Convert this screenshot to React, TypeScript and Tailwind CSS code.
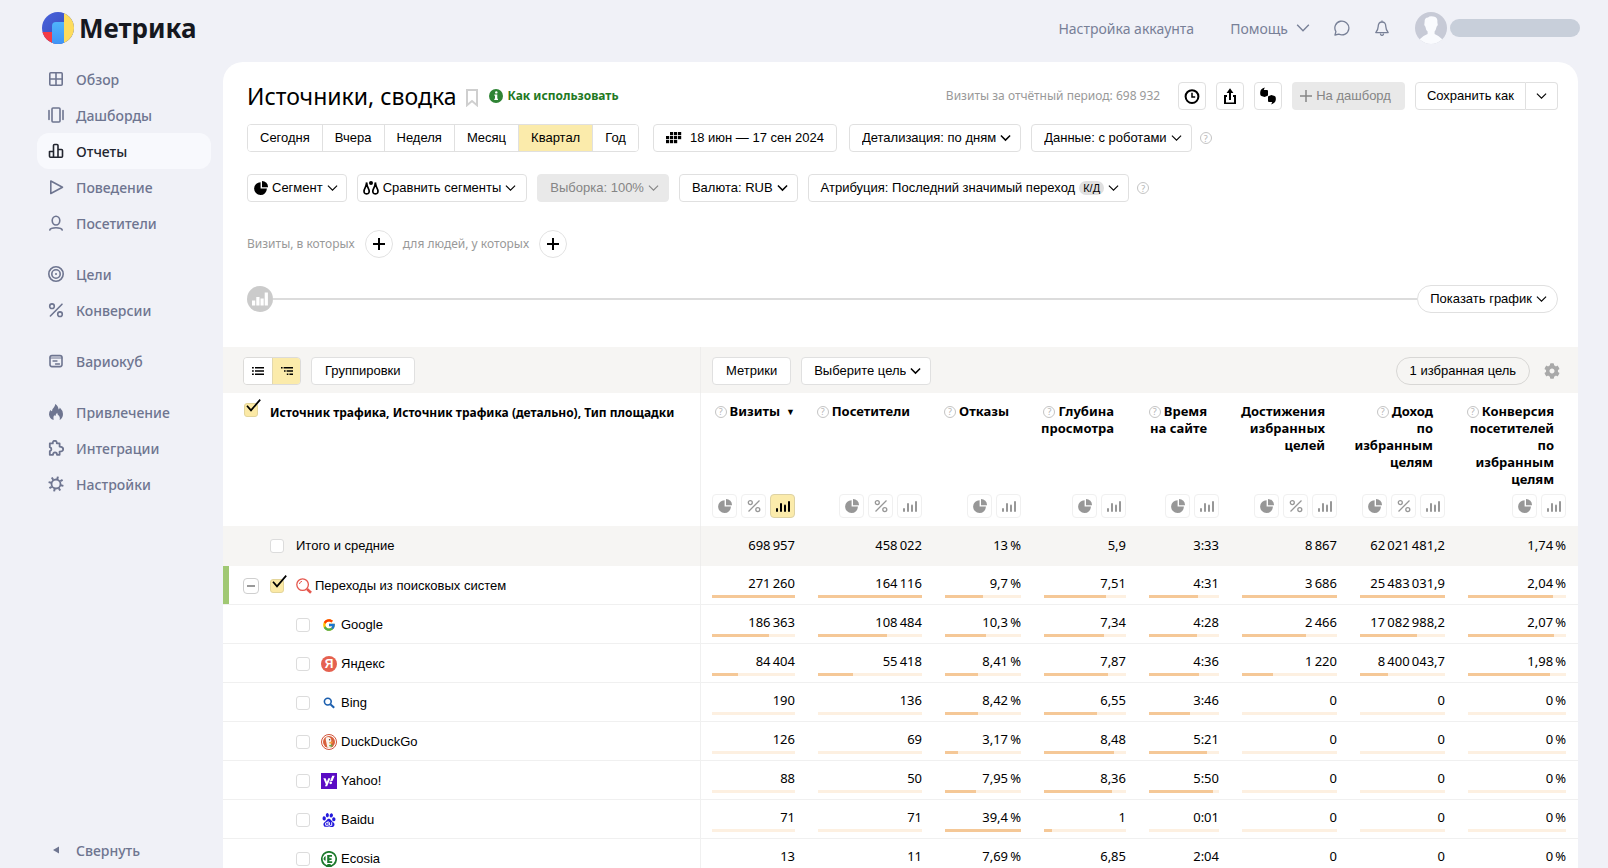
import React from 'react';
import clsx from 'clsx';
import { FcGoogle } from 'react-icons/fc';
import { FaCog, FaYahoo } from 'react-icons/fa';
import { SiBaidu } from 'react-icons/si';

/* ---------- icons ---------- */

const Chevron: React.FC<{ className?: string; bold?: boolean }> = ({ className = 'w-[11px] h-2', bold }) => (
  <svg viewBox="0 0 12 8" className={clsx('shrink-0', className)} fill="none" stroke="currentColor" strokeWidth={bold ? 1.6 : 1.2}>
    <path d="M1 1.3 L6 6.3 L11 1.3" />
  </svg>
);

const Pie: React.FC<{ className?: string }> = ({ className }) => (
  <svg viewBox="0 0 14 14" className={clsx('w-3.5 h-3.5 shrink-0', className)} fill="currentColor">
    <path d="M6.6 1.2 V7.6 H12.9 A6.4 6.4 0 1 1 6.6 1.2 Z" />
    <path d="M8 0 A6 6 0 0 1 14 6.2 H8 Z" />
  </svg>
);

const Percent: React.FC<{ className?: string }> = ({ className }) => (
  <svg viewBox="0 0 14 14" className={clsx('w-3.5 h-3.5 shrink-0', className)} fill="none" stroke="currentColor" strokeWidth="1.3">
    <circle cx="3.3" cy="3.6" r="2" />
    <circle cx="10.8" cy="10.6" r="2" />
    <path d="M12.5 1.5 L1.5 12.5" />
  </svg>
);

const Bars: React.FC<{ className?: string }> = ({ className }) => (
  <svg viewBox="0 0 14 12" className={clsx('w-3.5 h-3 shrink-0', className)} fill="currentColor">
    <rect x="0" y="8" width="2" height="4" rx="1" />
    <rect x="4" y="3" width="2" height="9" rx="1" />
    <rect x="8" y="4.5" width="2" height="7.5" rx="1" />
    <rect x="12" y="1" width="2" height="11" rx="1" />
  </svg>
);

const Help: React.FC<{ className?: string }> = ({ className }) => (
  <span className={clsx('inline-flex items-center justify-center w-3 h-3 rounded-full border border-[#c4c4c4] text-[#b4b4b4] text-[9px] leading-none font-normal shrink-0 font-["Noto_Sans",sans-serif]', className)}>
    ?
  </span>
);

const Logo = () => (
  <svg viewBox="0 0 32 32" className="w-8 h-8 shrink-0">
    <defs>
      <clipPath id="logo-clip">
        <circle cx="16" cy="16" r="16" />
      </clipPath>
      <linearGradient id="logo-sky" x1="0" y1="0" x2="0" y2="1">
        <stop offset="0" stopColor="#4fb4fb" />
        <stop offset="1" stopColor="#3f93f5" />
      </linearGradient>
      <linearGradient id="logo-blue" x1="0" y1="0" x2="1" y2="1">
        <stop offset="0" stopColor="#4a63dd" />
        <stop offset="1" stopColor="#3148b4" />
      </linearGradient>
    </defs>
    <g clipPath="url(#logo-clip)">
      <rect width="32" height="32" fill="url(#logo-blue)" />
      <rect y="20" width="12" height="12" fill="#f33b45" />
      <path d="M10 32 V14 Q10 10 14 10 H22 V32 Z" fill="url(#logo-sky)" />
      <rect x="22" width="10" height="32" fill="#fddc5c" />
    </g>
  </svg>
);

const navSvg = (children: React.ReactNode) => (
  <svg viewBox="0 0 16 16" className="w-4 h-4 shrink-0" fill="none" stroke="currentColor" strokeWidth="1.6" strokeLinejoin="round" strokeLinecap="round">
    {children}
  </svg>
);

const navIcons: Record<string, React.ReactNode> = {
  overview: navSvg(
    <>
      <rect x="1.8" y="1.8" width="12.4" height="12.4" rx="1" />
      <path d="M8 2 V14 M2 8 H14" />
    </>
  ),
  dashboards: navSvg(
    <>
      <rect x="4" y="1" width="8" height="14" rx="1" />
      <path d="M1 3.5 V12.5 M15 3.5 V12.5" />
    </>
  ),
  reports: navSvg(<path d="M1.5 8.5 H5.5 V14.2 H2.5 Q1.5 14.2 1.5 13.2 Z M5.5 14.2 V2.5 Q5.5 1.5 6.5 1.5 H9 Q10 1.5 10 2.5 V14.2 Z M10 6.5 H13.5 Q14.5 6.5 14.5 7.5 V13.2 Q14.5 14.2 13.5 14.2 H10" />),
  behavior: navSvg(<path d="M2.8 2 L14.5 8.2 L2.8 14.5 Z" />),
  visitors: navSvg(
    <>
      <ellipse cx="8" cy="5.6" rx="3.8" ry="4.4" />
      <path d="M1.8 15 Q2.4 12.8 8 12.8 Q13.6 12.8 14.2 15" />
    </>
  ),
  goals: navSvg(
    <>
      <circle cx="8" cy="8" r="7.2" />
      <circle cx="8" cy="8" r="4.2" />
      <circle cx="8" cy="8" r="1" fill="currentColor" stroke="none" />
    </>
  ),
  conversions: navSvg(
    <>
      <circle cx="4" cy="4.2" r="2.3" />
      <circle cx="12" cy="12.2" r="2.3" />
      <path d="M14 2.2 L2.4 14" />
    </>
  ),
  variocube: navSvg(
    <>
      <rect x="2" y="2.6" width="12" height="11" rx="2" />
      <path d="M2 5 H14" strokeWidth="1" />
      <path d="M5 8 H9 M7.5 11 H11.5" strokeWidth="1.3" />
    </>
  ),
  attraction: navSvg(
    <path
      d="M7.2 0 Q10.2 1.6 10.6 5.6 Q11.6 5 11.8 3.4 Q14.8 6.2 15 10 Q15 14 11.6 16 Q12.6 12.8 9.8 10.8 Q9.4 9.8 9.2 8.8 Q7.6 10.2 7.4 12 Q6.6 11.8 6.2 11 Q4.8 13 5.6 16 Q1.4 14.4 1 10.4 Q1 7.8 2.4 6 Q3 7 4 7.2 Q4 5.2 5.8 3.4 Q7.2 2 7.2 0 Z"
      fill="currentColor"
      stroke="none"
    />
  ),
  integrations: navSvg(
    <path
      d="M1.8 3.4 H4.8 Q4.6 0.8 6.8 0.8 Q9 0.8 8.8 3.4 H11.6 V6.6 Q15.2 6.8 15.2 9.2 Q15.2 11.6 11.6 11.6 V14.8 H9 Q9 12.4 7 12.4 Q5 12.4 5 14.8 H1.8 V11.2 Q3.4 10.8 3.4 9.2 Q3.4 7.6 1.8 7.2 Z"
      strokeWidth="1.8"
    />
  ),
  settings: navSvg(
    <>
      <circle cx="8" cy="8" r="4.5" strokeWidth="1.8" />
      <path
        d="M9.3 3.2 L9.9 0.6 M12.3 5.2 L14.6 3.8 M12.8 9.3 L15.4 9.9 M10.8 12.3 L12.2 14.6 M6.7 12.8 L6.1 15.4 M3.7 10.8 L1.4 12.2 M3.2 6.7 L0.6 6.1 M5.2 3.7 L3.8 1.4"
        strokeWidth="2"
        strokeLinecap="butt"
      />
    </>
  ),
};

/* ---------- data ---------- */

const navGroups = [
  [
    { icon: 'overview', label: 'Обзор' },
    { icon: 'dashboards', label: 'Дашборды' },
    { icon: 'reports', label: 'Отчеты', active: true },
    { icon: 'behavior', label: 'Поведение' },
    { icon: 'visitors', label: 'Посетители' },
  ],
  [
    { icon: 'goals', label: 'Цели' },
    { icon: 'conversions', label: 'Конверсии' },
  ],
  [{ icon: 'variocube', label: 'Вариокуб' }],
  [
    { icon: 'attraction', label: 'Привлечение' },
    { icon: 'integrations', label: 'Интеграции' },
    { icon: 'settings', label: 'Настройки' },
  ],
];

const periods = ['Сегодня', 'Вчера', 'Неделя', 'Месяц', 'Квартал', 'Год'];

interface Metric {
  lines: string[];
  help: boolean;
  percent: boolean;
  sorted?: boolean;
}

const metrics: Metric[] = [
  { lines: ['Визиты'], help: true, percent: true, sorted: true },
  { lines: ['Посетители'], help: true, percent: true },
  { lines: ['Отказы'], help: true, percent: false },
  { lines: ['Глубина', 'просмотра'], help: true, percent: false },
  { lines: ['Время', 'на сайте'], help: true, percent: false },
  { lines: ['Достижения', 'избранных', 'целей'], help: false, percent: true },
  { lines: ['Доход', 'по', 'избранным', 'целям'], help: true, percent: true },
  { lines: ['Конверсия', 'посетителей', 'по', 'избранным', 'целям'], help: true, percent: false },
];

const totals = ['698 957', '458 022', '13 %', '5,9', '3:33', '8 867', '62 021 481,2', '1,74 %'];

interface Row {
  name: string;
  values: string[];
  bars: number[];
}

const rows: Row[] = [
  { name: 'Переходы из поисковых систем', values: ['271 260', '164 116', '9,7 %', '7,51', '4:31', '3 686', '25 483 031,9', '2,04 %'], bars: [100, 100, 50, 75, 70, 100, 100, 87] },
  { name: 'Google', values: ['186 363', '108 484', '10,3 %', '7,34', '4:28', '2 466', '17 082 988,2', '2,07 %'], bars: [69, 66, 54, 73, 69, 67, 67, 88] },
  { name: 'Яндекс', values: ['84 404', '55 418', '8,41 %', '7,87', '4:36', '1 220', '8 400 043,7', '1,98 %'], bars: [31, 34, 44, 78, 72, 33, 33, 84] },
  { name: 'Bing', values: ['190', '136', '8,42 %', '6,55', '3:46', '0', '0', '0 %'], bars: [0, 0, 44, 65, 58, 0, 0, 0] },
  { name: 'DuckDuckGo', values: ['126', '69', '3,17 %', '8,48', '5:21', '0', '0', '0 %'], bars: [0, 0, 17, 85, 83, 0, 0, 0] },
  { name: 'Yahoo!', values: ['88', '50', '7,95 %', '8,36', '5:50', '0', '0', '0 %'], bars: [0, 0, 41, 83, 91, 0, 0, 0] },
  { name: 'Baidu', values: ['71', '71', '39,4 %', '1', '0:01', '0', '0', '0 %'], bars: [0, 0, 100, 10, 0, 0, 0, 0] },
  { name: 'Ecosia', values: ['13', '11', '7,69 %', '6,85', '2:04', '0', '0', '0 %'], bars: [0, 0, 40, 68, 32, 0, 0, 0] },
];

// digit groups are separated with a thin space
const thin = (value: string) => value.replace(/ /g, '\u2009');

const sourceIcons: Record<string, React.ReactNode> = {
  Google: <FcGoogle className="w-3.5 h-3.5" />,
  Яндекс: (
    <span className="flex items-center justify-center w-4 h-4 rounded-full bg-[#e5614f] text-white text-[12px] leading-none font-bold">Я</span>
  ),
  Bing: (
    <svg viewBox="0 0 12 12" className="w-3 h-3" fill="none" stroke="#1c5fae" strokeWidth="1.6">
      <circle cx="4.8" cy="4.6" r="3.4" />
      <path d="M7.4 7.2 L11.2 10.8" strokeWidth="2" />
    </svg>
  ),
  DuckDuckGo: (
    <svg viewBox="0 0 16 16" className="w-4 h-4">
      <circle cx="8" cy="8" r="7.5" fill="#fff" stroke="#d0533a" strokeWidth="1" />
      <circle cx="8" cy="8" r="6" fill="#d9603c" />
      <path d="M5 3.6 Q8.4 2 10 4.8 Q10.8 6.8 9.8 8.6 L10.2 13.6 Q8 14.4 6.4 13.6 Q5.6 9.6 5 7 Q4.4 4.8 5 3.6 Z" fill="#fbf4ee" />
      <circle cx="8.6" cy="5.8" r="0.7" fill="#4a3a33" />
      <path d="M8.2 8 L12 7.6 L11 9.4 L8.4 9.6 Z" fill="#f2a13a" />
      <path d="M8 11 L11.4 10.4 V12.8 L8.6 12.6 Z" fill="#6aa84a" />
    </svg>
  ),
  'Yahoo!': (
    <span className="flex items-center justify-center w-4 h-4 bg-[#5a0bc4]">
      <FaYahoo className="w-3 h-3 text-white" />
    </span>
  ),
  Baidu: <SiBaidu className="w-3.5 h-3.5 text-[#2319dc]" />,
  Ecosia: (
    <svg viewBox="0 0 16 16" className="w-4 h-4">
      <circle cx="8" cy="8" r="7.2" fill="#fff" stroke="#1d7a2d" strokeWidth="1.7" />
      <path d="M6.2 4 H11 V5.8 H8.4 V7.2 H10.6 V8.9 H8.4 V10.3 H11.2 V12 H6.2 Z" fill="#1d7a2d" />
      <path d="M2.4 8 Q3 5.6 4.6 5 V9.8 Q3 9.6 2.4 8 Z M5 16 L6.6 13 H9.4 L11 16 Z" fill="#1d7a2d" />
    </svg>
  ),
};

/* ---------- controls ---------- */

const btn = 'h-7 flex items-center bg-white border border-[#e0e0e0] rounded whitespace-nowrap cursor-pointer';

interface SelectProps {
  label: string;
  value: string;
  disabled?: boolean;
  bold?: boolean;
}

const Select: React.FC<SelectProps> = ({ label, value, disabled, bold }) => (
  <label
    className={clsx(
      'h-7 flex items-center gap-1 border rounded pl-3 pr-[9px] whitespace-nowrap',
      disabled ? 'bg-[#e9e9e9] border-[#e9e9e9] text-[#858585]' : 'bg-white border-[#e0e0e0]'
    )}
  >
    <select aria-label={label} disabled={disabled} className="appearance-none field-sizing-content bg-transparent outline-none opacity-100">
      <option>{value}</option>
    </select>
    <Chevron bold={bold} />
  </label>
);

const Checkbox: React.FC<{ label: string; checked?: boolean }> = ({ label, checked }) => (
  <span className="relative block w-3.5 h-3.5 shrink-0">
    <input
      type="checkbox"
      aria-label={label}
      defaultChecked={checked}
      className="peer block appearance-none w-3.5 h-3.5 rounded-[3px] border border-[#dcdcdc] bg-white checked:bg-[#fbe9a5] checked:border-[#e3d59b]"
    />
    <svg viewBox="0 0 16 14" className="absolute left-0.5 -top-1 w-4 h-3.5 hidden peer-checked:block pointer-events-none" fill="none" stroke="#000" strokeWidth="1.7">
      <path d="M1 6.8 L5 11.4 L14.2 0.6" />
    </svg>
  </span>
);

/* ---------- sections ---------- */

const TopBar = () => (
  <header className="flex items-center justify-between h-[62px] pb-1.5 pl-[42px] pr-7 shrink-0">
    <a href="#" className="flex items-center gap-[5px]">
      <Logo />
      <span className="text-[26px] leading-8 font-bold text-[#16181f]">Метрика</span>
    </a>
    <div className="flex items-center text-[14px] text-[#788097]">
      <a href="#" className="mr-9">Настройка аккаунта</a>
      <button className="flex items-center gap-2 mr-6 cursor-pointer">
        Помощь
        <Chevron className="w-3.5 h-2.5" />
      </button>
      <button aria-label="Чат" className="mr-6">
        <svg viewBox="0 0 16 16" className="w-4 h-4" fill="none" stroke="currentColor" strokeWidth="1.3" strokeLinejoin="round">
          <path d="M1 15 L1.9 11.6 A7 6.9 0 1 1 4.8 14.2 Z" />
        </svg>
      </button>
      <button aria-label="Уведомления" className="mr-[25px]">
        <svg viewBox="0 0 16 16" className="w-4 h-4" fill="none" stroke="currentColor" strokeWidth="1.3" strokeLinejoin="round">
          <path d="M8 0.4 V2 M8 2 Q4.2 2 4.2 6.6 Q4.2 9.6 1.8 12.6 H14.2 Q11.8 9.6 11.8 6.6 Q11.8 2 8 2 Z M6.4 13.6 Q6.6 15.4 8 15.4 Q9.4 15.4 9.6 13.6" />
        </svg>
      </button>
      <svg viewBox="0 0 32 32" className="w-8 h-8 mr-[3px]">
        <clipPath id="avatar-clip">
          <circle cx="16" cy="16" r="16" />
        </clipPath>
        <g clipPath="url(#avatar-clip)">
          <rect width="32" height="32" fill="#c7cad6" />
          <path d="M9.6 10 Q9.4 5.4 13 5.4 Q14.6 3.6 18.4 4.4 Q23 4.8 22.4 10.4 Q23.6 13 21.6 14.8 Q21 18 19.6 19.4 V22 Q25 24.4 27 27 L27 32 H5 V27 Q7.4 24 12.6 22 V19.4 Q10.8 18 10.4 14.8 Q8.6 13 9.6 10 Z" fill="#fafbfe" />
        </g>
      </svg>
      <div className="w-[130px] h-[18px] rounded-full bg-[#c8cfda]" />
    </div>
  </header>
);

const Sidebar = () => (
  <aside className="flex flex-col w-[223px] shrink-0 -mt-px pb-0.5 pl-[37px] pr-3 text-[14px] font-medium text-[#6e7590]">
    <nav className="flex flex-col gap-[15px]">
      {navGroups.map((group, i) => (
        <ul key={i}>
          {group.map((item) => (
            <li key={item.label}>
              <a
                href="#"
                className={clsx('flex items-center gap-3 h-9 pl-[11px] rounded-xl', 'active' in item && item.active && 'bg-[#f8f9fd] text-[#22252f]')}
              >
                {navIcons[item.icon]}
                {item.label}
              </a>
            </li>
          ))}
        </ul>
      ))}
    </nav>
    <button className="mt-auto flex items-center gap-3 h-8 pl-[11px] cursor-pointer">
      <svg viewBox="0 0 16 16" className="w-4 h-4" fill="currentColor">
        <path d="M11 4.5 V11.5 L5 8 Z" />
      </svg>
      Свернуть
    </button>
  </aside>
);

const TitleRow = () => (
  <div className="flex items-center h-7">
    <h1 className="text-[23px] leading-7 font-normal">Источники, сводка</h1>
    <button aria-label="В избранное" className="ml-2.5 mt-1">
      <svg viewBox="0 0 12 18" className="w-3 h-[18px]" fill="none" stroke="#cfcfcf" strokeWidth="2">
        <path d="M1 1 H11 V16.2 L6 12 L1 16.2 Z" />
      </svg>
    </button>
    <a href="#" className="flex items-center gap-1 ml-[11px] text-[12px] font-bold text-[#23791f]">
      <svg viewBox="0 0 14 14" className="w-3.5 h-3.5">
        <circle cx="7" cy="7" r="7" fill="#2f8435" />
        <circle cx="7.3" cy="3.4" r="1.2" fill="#fff" />
        <path d="M5.4 5.6 H8.3 V9.8 H9 V11 H5.3 V9.8 H6 V6.8 H5.4 Z" fill="#fff" />
      </svg>
      Как использовать
    </a>
    <div className="ml-auto flex items-center gap-2.5 font-['Liberation_Sans',Arial,sans-serif] text-[13px]">
      <span className="mr-2 text-[12px] text-[#999] font-['Noto_Sans',sans-serif]">Визиты за отчётный период: 698 932</span>
      <button aria-label="История" className={clsx(btn, 'w-7 justify-center')}>
        <svg viewBox="0 0 16 16" className="w-4 h-4" fill="none" stroke="#000">
          <circle cx="8" cy="8.6" r="6.4" strokeWidth="2" />
          <path d="M8 4.8 V9 H11.2" strokeWidth="1.5" />
        </svg>
      </button>
      <button aria-label="Экспорт" className={clsx(btn, 'w-7 justify-center')}>
        <svg viewBox="0 0 16 16" className="w-4 h-4" fill="none" stroke="#000" strokeWidth="2">
          <path d="M5 8 H3 V15.4 H13 V8 H11" />
          <path d="M8 12 V3" />
          <path d="M4.6 5 L8 0.2 L11.4 5 Z" fill="#000" stroke="none" />
        </svg>
      </button>
      <button aria-label="Комментарии" className={clsx(btn, 'w-7 justify-center')}>
        <svg viewBox="0 0 16 18" className="w-4 h-[18px]" fill="#000">
          <path d="M4.8 0.6 L3.8 3 H7 Q8 3 8 4 V8 Q8 9 7 9 L4.6 10 L1.4 9 Q0.2 8.4 0.2 7 V5.2 Q0.4 1.8 4.8 0.6 Z" />
          <path d="M11.2 17.4 L12.2 15 H9 Q8 15 8 14 V10 Q8 9 9 9 L11.4 8 L14.6 9 Q15.8 9.6 15.8 11 V12.8 Q15.6 16.2 11.2 17.4 Z" />
        </svg>
      </button>
      <button disabled className="h-7 flex items-center gap-1 px-2 pr-3.5 rounded bg-[#e9e9e9] text-[#858585] whitespace-nowrap">
        <svg viewBox="0 0 12 12" className="w-3 h-3" stroke="currentColor" strokeWidth="1.5">
          <path d="M6 0 V12 M0 6 H12" />
        </svg>
        На дашборд
      </button>
      <div className="flex">
        <button className={clsx(btn, 'rounded-r-none px-[11px]')}>Сохранить как</button>
        <button aria-label="Варианты сохранения" className={clsx(btn, 'rounded-l-none border-l-0 w-8 justify-center')}>
          <Chevron />
        </button>
      </div>
    </div>
  </div>
);

const Filters = () => (
  <div className="font-['Liberation_Sans',Arial,sans-serif] text-[13px]">
    <div className="flex items-center mt-3.5">
      <div className="flex h-7 border border-[#e0e0e0] rounded overflow-hidden">
        {periods.map((p) => (
          <button
            key={p}
            className={clsx('px-3 border-l border-[#e0e0e0] first:border-l-0 cursor-pointer', p === 'Квартал' ? 'bg-[#fbebab]' : 'bg-white')}
          >
            {p}
          </button>
        ))}
      </div>
      <button className={clsx(btn, 'ml-3.5 px-3 gap-2')}>
        <svg viewBox="0 0 16 12" className="w-4 h-3" fill="#000">
          {[[4, 0], [8, 0], [12, 0], [0, 4], [4, 4], [8, 4], [12, 4], [0, 8], [4, 8], [8, 8]].map(([x, y]) => (
            <rect key={`${x}-${y}`} x={x} y={y} width="3.2" height="3.2" />
          ))}
        </svg>
        18 июн — 17 сен 2024
      </button>
      <div className="flex items-center gap-2.5 ml-3">
        <Select label="Детализация" value="Детализация: по дням" bold />
        <Select label="Данные" value="Данные: с роботами" />
      </div>
      <Help className="ml-2" />
    </div>

    <div className="flex items-center gap-2.5 mt-[22px]">
      <button className={clsx(btn, 'gap-1 pl-1.5 pr-2')}>
        <Pie />
        Сегмент
        <Chevron />
      </button>
      <button className={clsx(btn, 'gap-1 pl-[5px] pr-2.5')}>
        <svg viewBox="0 0 16 14" className="w-4 h-3.5" fill="none" stroke="#000" strokeWidth="1.7">
          <circle cx="8" cy="2" r="2" fill="#000" stroke="none" />
          <path d="M3.6 3.4 L1.2 9 Q0.4 12.8 3.6 12.8 Q6.8 12.8 6 9 Z" />
          <path d="M12.4 3.4 L10 9 Q9.2 12.8 12.4 12.8 Q15.6 12.8 14.8 9 Z" />
          <path d="M2.6 1.6 H4.6 V5 H2.6 Z M11.4 1.6 H13.4 V5 H11.4 Z" fill="#000" stroke="none" />
        </svg>
        Сравнить сегменты
        <Chevron />
      </button>
      <Select label="Выборка" value="Выборка: 100%" disabled />
      <Select label="Валюта" value="Валюта: RUB" bold />
      <button className={clsx(btn, 'pl-3 pr-[9px]')}>
        Атрибуция: Последний значимый переход
        <span className="mx-1 px-1 h-3.5 leading-[14px] rounded-full bg-[#e0e0e0] text-[11px]">К/Д</span>
        <Chevron />
      </button>
      <Help className="-ml-0.5" />
    </div>
  </div>
);

const SegmentRow = () => {
  const plus = (label: string) => (
    <button aria-label={label} className="flex items-center justify-center w-7 h-7 mx-2.5 rounded-full border border-[#e2e2e2] bg-white cursor-pointer">
      <svg viewBox="0 0 12 12" className="w-3 h-3" stroke="#000" strokeWidth="2">
        <path d="M6 0 V12 M0 6 H12" />
      </svg>
    </button>
  );
  return (
    <div className="flex items-center mt-7 text-[12px] text-[#999]">
      Визиты, в которых
      {plus('Добавить условие для визитов')}
      для людей, у которых
      {plus('Добавить условие для людей')}
    </div>
  );
};

const ChartStub = () => (
  <div className="flex items-center mt-[27px] mb-[34px]">
    <span className="flex items-center justify-center w-[26px] h-[26px] rounded-full bg-[#cbcbcb]">
      <svg viewBox="0 0 16 14" className="w-4 h-3.5" fill="#fff">
        <path d="M0 8.5 H3.2 V13.5 H0 Z M4.3 5 H7.5 V13.5 H4.3 Z M8.5 6.5 H11.7 V13.5 H8.5 Z M12.7 0.5 H15.9 V13.5 H12.7 Z" />
      </svg>
    </span>
    <div className="flex-1 h-0.5 bg-[#dcdcdc]" />
    <button className="h-7 flex items-center gap-1 pl-3 pr-2.5 rounded-full border border-[#e0e0e0] bg-white text-[13px] font-['Liberation_Sans',Arial,sans-serif] cursor-pointer">
      Показать график
      <Chevron />
    </button>
  </div>
);

const MetricToggles: React.FC<{ metric: Metric }> = ({ metric }) => {
  const cls = 'flex items-center justify-center w-[25px] h-6 rounded border border-[#f0f0f0] text-[#979797] cursor-pointer';
  return (
    <div className="flex justify-end gap-1 -ml-1">
      <button aria-label="Круговая диаграмма" className={cls}>
        <Pie />
      </button>
      {metric.percent && (
        <button aria-label="Проценты" className={cls}>
          <Percent />
        </button>
      )}
      <button
        aria-label="Гистограмма"
        className={clsx('flex items-center justify-center w-[25px] h-6 rounded border cursor-pointer', metric.sorted ? 'bg-[#fbebab] border-[#ddd2a4] text-black' : 'border-[#f0f0f0] text-[#979797]')}
      >
        <Bars />
      </button>
    </div>
  );
};

const ReportTable = () => (
  <table className="w-full table-fixed border-separate border-spacing-0 text-[13px]">
    <colgroup>
      <col className="w-[478px]" />
      <col className="w-[106px]" />
      <col className="w-[127px]" />
      <col className="w-[99px]" />
      <col className="w-[105px]" />
      <col className="w-[93px]" />
      <col className="w-[118px]" />
      <col className="w-[108px]" />
      <col className="w-[121px]" />
    </colgroup>
    <thead>
      <tr className="bg-[#f6f5f3] font-['Liberation_Sans',Arial,sans-serif]">
        <td className="h-[46px] pt-px pl-5 border-r border-[#eeedec]">
          <div className="flex items-center gap-2.5">
            <div className="flex h-7 border border-[#dcdbd9] rounded overflow-hidden">
              <button aria-label="Список" className="flex items-center justify-center w-7 bg-white">
                <svg viewBox="0 0 12 8" className="w-3 h-2" fill="#000">
                  <path d="M0 0 H1.8 V1.6 H0 Z M3 0 H12 V1.6 H3 Z M0 3.2 H1.8 V4.8 H0 Z M3 3.2 H12 V4.8 H3 Z M0 6.4 H1.8 V8 H0 Z M3 6.4 H12 V8 H3 Z" />
                </svg>
              </button>
              <button aria-label="Дерево" className="flex items-center justify-center w-7 bg-[#fbebab] border-l border-[#e3d8ac]">
                <svg viewBox="0 0 12 8" className="w-3 h-2" fill="#000">
                  <path d="M0 0 H1.6 V1.6 H0 Z M2.6 0 H12 V1.6 H2.6 Z M3 3.2 H4.6 V4.8 H3 Z M5.6 3.2 H12 V4.8 H5.6 Z M5.8 6.4 H7.4 V8 H5.8 Z M8.4 6.4 H12 V8 H8.4 Z" />
                </svg>
              </button>
            </div>
            <button className={clsx(btn, 'px-[13px]')}>Группировки</button>
          </div>
        </td>
        <td colSpan={8} className="pt-px pl-[11px] pr-[18px]">
          <div className="flex items-center gap-2.5">
            <button className={clsx(btn, 'px-[13px]')}>Метрики</button>
            <Select label="Цель" value="Выберите цель" bold />
            <button className="ml-auto h-7 px-[13px] rounded-full border border-[#d8d7d5] cursor-pointer">1 избранная цель</button>
            <button aria-label="Настройки таблицы" className="ml-1 text-[#a9a9a9]">
              <FaCog className="w-4 h-4" />
            </button>
          </div>
        </td>
      </tr>
      <tr className="h-[133px] align-top font-bold">
        <th className="pt-2.5 pl-[21px] text-left text-[12px] border-r border-[#f0f0f0]">
          <div className="flex items-start gap-3">
            <Checkbox label="Выбрать все" checked />
            <span className="leading-5">Источник трафика, Источник трафика (детально), Тип площадки</span>
          </div>
        </th>
        {metrics.map((m) => (
          <th key={m.lines.join()} className="pt-2.5 pl-[11px] pr-3 text-right font-bold">
            <div className="h-[91px] leading-[17px] whitespace-nowrap flex flex-col items-end">
              {m.lines.map((line, i) => (
                <span key={line} className={clsx('flex items-center gap-[3px]', !(m.sorted && i === 0) && 'pr-3')}>
                  {i === 0 && m.help && <Help />}
                  {line}
                  {m.sorted && <span className="pl-[3px] text-[9px]">▼</span>}
                </span>
              ))}
            </div>
            <MetricToggles metric={m} />
          </th>
        ))}
      </tr>
    </thead>
    <tbody>
      <tr className="h-10 bg-[#f6f5f3]">
        <td className="pl-[47px] border-r border-[#eeedec]">
          <div className="flex items-center gap-3 font-['Liberation_Sans',Arial,sans-serif]">
            <Checkbox label="Итого и средние" />
            Итого и средние
          </div>
        </td>
        {totals.map((v, i) => (
          <td key={i} className="pr-3 text-right">{thin(v)}</td>
        ))}
      </tr>
      {rows.map((row, r) => (
        <tr key={row.name} className="h-[39px]">
          <td className={clsx('py-0 border-r border-b border-[#f0f0f0]', r === 0 && 'shadow-[inset_6px_0_#a0c873]')}>
            <div className={clsx("flex items-center pt-px font-['Liberation_Sans',Arial,sans-serif]", r === 0 ? 'pl-5' : 'pl-[73px]')}>
              {r === 0 && (
                <button aria-label="Свернуть группу" className="flex items-center justify-center w-4 h-4 mr-[11px] rounded border border-[#cfcfcf]">
                  <span className="w-2 h-0.5 bg-[#9a9a9a]" />
                </button>
              )}
              <Checkbox label={row.name} checked={r === 0} />
              {r === 0 ? (
                <svg viewBox="0 0 16 16" className="w-4 h-4 ml-3 mr-[3px]" fill="none" stroke="#e5574d">
                  <circle cx="6.6" cy="6.6" r="5.8" strokeWidth="1.3" />
                  <path d="M3.4 6 Q3.8 3.8 6 3.3" strokeWidth="1" />
                  <path d="M11 11 L15 14.8" strokeWidth="2.6" />
                </svg>
              ) : (
                <span className="flex items-center justify-center w-4 h-4 ml-[11px] mr-1">{sourceIcons[row.name]}</span>
              )}
              {row.name}
            </div>
          </td>
          {row.values.map((v, i) => (
            <td key={i} className="pl-[11px] pr-3 py-0 text-right border-b border-[#f0f0f0]">
              <div className="leading-5">{thin(v)}</div>
              <div className="h-[3px] mt-0.5 bg-[#fdf0e1]">
                <div className="h-full bg-[#f5c897]" style={{ width: `${row.bars[i]}%` }} />
              </div>
            </td>
          ))}
        </tr>
      ))}
    </tbody>
  </table>
);

const App = () => (
  <div className="flex flex-col h-screen overflow-hidden bg-[#f0f1f7] text-black font-['Noto_Sans',sans-serif]">
    <TopBar />
    <div className="flex flex-1 min-h-0">
      <Sidebar />
      <main className="flex-1 min-w-0 mr-[30px] overflow-hidden bg-white rounded-t-[20px]">
        <div className="pt-5 pl-6 pr-5">
          <TitleRow />
          <Filters />
          <SegmentRow />
          <ChartStub />
        </div>
        <ReportTable />
      </main>
    </div>
  </div>
);

export default App;
